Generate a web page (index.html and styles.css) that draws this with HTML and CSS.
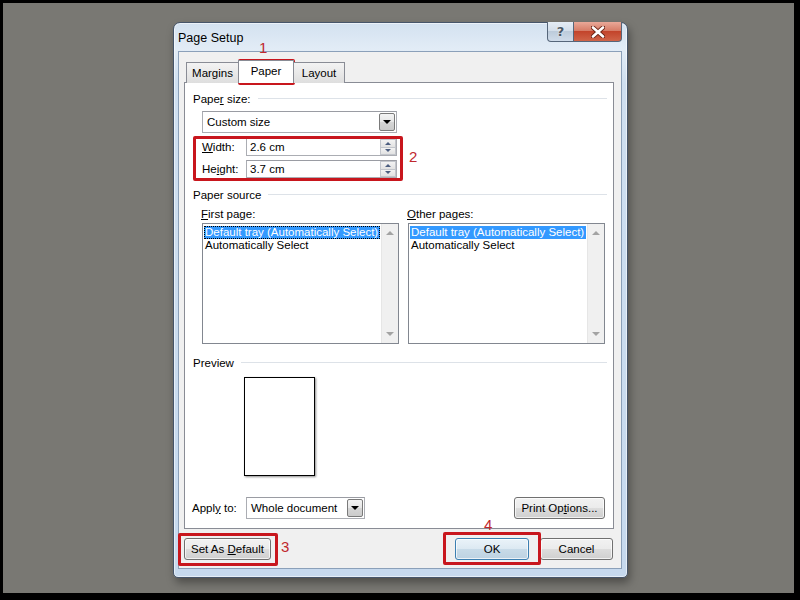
FILE: index.html
```html
<!DOCTYPE html>
<html lang="en">
<head>
  <meta charset="UTF-8" />
  <title>Page Setup</title>
  <link rel="stylesheet" href="styles.css">
</head>
<body>
  <div class="screen">
    <div class="dialog">
      <div class="titlebar">
        <span class="title">Page Setup</span>
        <div class="caption-btns">
          <div class="cap help">?</div>
          <div class="cap close">
            <svg width="14" height="12" viewBox="0 0 14 12">
              <path d="M2 1.5 L12 10.5 M12 1.5 L2 10.5" stroke="#6b2415" stroke-width="4.4" stroke-linecap="round"/>
              <path d="M2 1.5 L12 10.5 M12 1.5 L2 10.5" stroke="#fff" stroke-width="2.6" stroke-linecap="round"/>
            </svg>
          </div>
        </div>
      </div>

      <div class="client">
        <div class="tabs">
          <div class="tab tab-margins">Margins</div>
          <div class="tab tab-paper selected">Paper</div>
          <div class="tab tab-layout">Layout</div>
        </div>

        <div class="panel">
          <div class="group"><span>Pape<u>r</u> size:</span></div>
          <div class="indent">
            <div class="select select-size">
              <span>Custom size</span>
              <span class="drop"><i class="tri-down"></i></span>
            </div>
            <div class="field-row first">
              <label><u>W</u>idth:</label>
              <div class="spin-input">
                <span>2.6 cm</span>
                <span class="spin"><b><i class="tri-up"></i></b><b><i class="tri-down small"></i></b></span>
              </div>
            </div>
            <div class="field-row">
              <label>He<u>i</u>ght:</label>
              <div class="spin-input">
                <span>3.7 cm</span>
                <span class="spin"><b><i class="tri-up"></i></b><b><i class="tri-down small"></i></b></span>
              </div>
            </div>
          </div>

          <div class="group source"><span>Paper source</span></div>
          <div class="indent lists">
            <div class="list-col">
              <div class="list-label"><u>F</u>irst page:</div>
              <div class="listbox">
                <div class="items">
                  <div class="item active focus">Default tray (Automatically Select)</div>
                  <div class="item">Automatically Select</div>
                </div>
                <div class="scrollbar"><i class="sb-up"></i><i class="sb-down"></i></div>
              </div>
            </div>
            <div class="list-col">
              <div class="list-label"><u>O</u>ther pages:</div>
              <div class="listbox">
                <div class="items">
                  <div class="item active">Default tray (Automatically Select)</div>
                  <div class="item">Automatically Select</div>
                </div>
                <div class="scrollbar"><i class="sb-up"></i><i class="sb-down"></i></div>
              </div>
            </div>
          </div>

          <div class="group preview-label"><span>Preview</span></div>
          <div class="preview-page"></div>

          <div class="apply-row">
            <label>Appl<u>y</u> to:</label>
            <div class="select select-apply">
              <span>Whole document</span>
              <span class="drop"><i class="tri-down"></i></span>
            </div>
            <button class="btn btn-print">Print Op<u>t</u>ions...</button>
          </div>
        </div>

        <div class="footer">
          <button class="btn btn-default">Set As <u>D</u>efault</button>
          <div class="footer-right">
            <button class="btn btn-ok">OK</button>
            <button class="btn btn-cancel">Cancel</button>
          </div>
        </div>
      </div>
    </div>

    <!-- red annotation boxes and step numbers -->
    <div class="mark mark-1"></div>
    <div class="mark mark-2"></div>
    <div class="mark mark-3"></div>
    <div class="mark mark-4"></div>
    <span class="num num-1">1</span>
    <span class="num num-2">2</span>
    <span class="num num-3">3</span>
    <span class="num num-4">4</span>
  </div>
</body>
</html>
```

FILE: styles.css
```css
/* Base */
* {
  box-sizing: border-box;
}
body {
  margin: 0;
  background: #000;
  font-family: "Liberation Sans", Arial, sans-serif;
  font-size: 11.5px;
  color: #000;
}
u {
  text-decoration: underline;
  text-underline-offset: 1px;
}
.screen {
  position: relative;
  width: 800px;
  height: 600px;
  background: #797873;
  border-style: solid;
  border-color: #000;
  border-width: 3px 6px 7px 3px;
  padding: 19px 0 0 170px;
}

/* Dialog frame */
.dialog {
  width: 455px;
  height: 556px;
  display: flex;
  flex-direction: column;
  border: 1px solid #46556a;
  border-radius: 7px 7px 5px 5px;
  background: linear-gradient(#d3e1f0, #e2ecf6 26px, #cfdff0 60px, #c6d9ee);
  padding: 0 5px 8px 4px;
  box-shadow: 2px 5px 8px rgba(0, 0, 0, 0.35), inset 0 0 0 1px rgba(255, 255, 255, 0.55);
}
.titlebar {
  height: 28px;
  display: flex;
  justify-content: space-between;
  align-items: flex-start;
}
.title {
  margin-top: 8px;
  font-size: 12.5px;
  line-height: 14px;
}
.caption-btns {
  display: flex;
  margin-top: -1px;
}
.cap {
  height: 20px;
  border: 1px solid #56667a;
  border-top: none;
  display: flex;
  align-items: center;
  justify-content: center;
}
.help {
  width: 27px;
  border-radius: 0 0 0 4px;
  background: linear-gradient(#e4ecf5, #d2dde9 50%, #bccbdb 50%, #d0dcea);
  font-family: "DejaVu Sans", sans-serif;
  font-size: 13px;
  font-weight: bold;
  color: #4b5866;
  text-shadow: 0 0 2px #fff;
}
.close {
  width: 48px;
  border-left: none;
  border-radius: 0 0 4px 0;
  background: linear-gradient(#e9a898, #d67d68 45%, #c3442b 50%, #cf6448);
}

/* Client area */
.client {
  flex: 1;
  display: flex;
  flex-direction: column;
  background: #f0f0f0;
  border: 1px solid #8ba0b9;
  padding: 8px 7px 0 5px;
}
.tabs {
  display: flex;
  align-items: flex-end;
  height: 23px;
  margin-bottom: -1px;
  padding-left: 2px;
  position: relative;
  z-index: 1;
}
.tab {
  height: 21px;
  line-height: 20px;
  text-align: center;
  border: 1px solid #898c95;
  border-bottom: none;
  background: linear-gradient(#f3f3f3, #e9e9e9 50%, #dedede);
}
.tab + .tab {
  margin-left: -1px;
}
.tab-margins {
  width: 53px;
}
.tab-paper {
  width: 56px;
}
.tab-layout {
  width: 52px;
}
.tab.selected {
  height: 23px;
  line-height: 21px;
  background: #fff;
  position: relative;
  z-index: 2;
}

/* Tab page */
.panel {
  height: 447px;
  background: #fff;
  border: 1px solid #898c95;
  padding: 8px 6px 0 8px;
}
.group {
  display: flex;
  align-items: center;
  gap: 7px;
  height: 15px;
}
.group::after {
  content: "";
  flex: 1;
  border-top: 1px solid #dde2e8;
}
.indent {
  margin-left: 9px;
}

/* Combo boxes */
.select {
  display: flex;
  align-items: center;
  justify-content: space-between;
  height: 22px;
  background: #fff;
  border: 1px solid #abadb3;
  border-top-color: #9a9ca3;
  padding: 0 1px 0 4px;
}
.select-size {
  width: 195px;
  margin-top: 5px;
}
.drop {
  width: 16px;
  height: 18px;
  display: flex;
  align-items: center;
  justify-content: center;
  border: 1px solid #7a7a7a;
  border-radius: 2px;
  background: linear-gradient(#f4f4f4, #e6e6e6 50%, #d6d6d6 50%, #cbcbcb);
}
.tri-down {
  width: 0;
  height: 0;
  border-left: 4px solid transparent;
  border-right: 4px solid transparent;
  border-top: 4px solid #000;
}
.tri-down.small {
  border-left-width: 3px;
  border-right-width: 3px;
  border-top: 3px solid #4c5e80;
}
.tri-up {
  width: 0;
  height: 0;
  border-left: 3px solid transparent;
  border-right: 3px solid transparent;
  border-bottom: 3px solid #4c5e80;
}

/* Width / Height */
.field-row {
  display: flex;
  align-items: center;
  margin-top: 4px;
}
.field-row.first {
  margin-top: 5px;
}
.field-row label {
  width: 44px;
}
.spin-input {
  width: 151px;
  height: 18px;
  display: flex;
  align-items: center;
  justify-content: space-between;
  border: 1px solid #abadb3;
  border-top-color: #9a9ca3;
  padding: 0 0 0 3px;
}
.spin {
  width: 16px;
  height: 16px;
  display: flex;
  flex-direction: column;
}
.spin b {
  flex: 1;
  display: flex;
  align-items: center;
  justify-content: center;
  background: linear-gradient(#f3f3f3, #e2e2e2);
  border: 1px solid #c3c6cc;
}
.spin b + b {
  border-top: none;
}

/* Paper source lists */
.source {
  margin-top: 9px;
}
.lists {
  display: flex;
  gap: 9px;
  margin-top: 5px;
}
.list-label {
  height: 14px;
  line-height: 14px;
  margin-left: -1px;
}
.listbox {
  width: 197px;
  height: 121px;
  margin-top: 2px;
  display: flex;
  border: 1px solid #828790;
  background: #fff;
}
.items {
  flex: 1;
  min-width: 0;
  padding: 2px 0 0 1px;
}
.item {
  width: fit-content;
  height: 13px;
  line-height: 13px;
  padding: 0 2px 0 1px;
  white-space: nowrap;
}
.item.active {
  background: #3399ff;
  color: #fff;
}
.item.focus {
  outline: 1px dotted #000;
  outline-offset: -1px;
}
.scrollbar {
  width: 17px;
  flex-shrink: 0;
  display: flex;
  flex-direction: column;
  justify-content: space-between;
  align-items: center;
  padding: 7px 0 7px;
  background: #f0f0f0;
  border-left: 1px solid #e6e6e6;
}
.sb-up {
  border-left: 4px solid transparent;
  border-right: 4px solid transparent;
  border-bottom: 4px solid #a3a3a3;
}
.sb-down {
  border-left: 4px solid transparent;
  border-right: 4px solid transparent;
  border-top: 4px solid #a3a3a3;
}

/* Preview */
.preview-label {
  margin-top: 11px;
}
.preview-page {
  width: 71px;
  height: 99px;
  margin: 7px 0 0 51px;
  background: #fff;
  border: 1px solid #000;
  box-shadow: 1px 1px 2px rgba(0, 0, 0, 0.45);
}
.apply-row {
  display: flex;
  align-items: center;
  margin-top: 21px;
  margin-left: -1px;
}
.apply-row label {
  width: 54px;
}
.select-apply {
  width: 119px;
}

/* Buttons */
.btn {
  height: 22px;
  padding: 0;
  font-family: inherit;
  font-size: 11.5px;
  color: #000;
  border: 1px solid #707070;
  border-radius: 3px;
  background: linear-gradient(#f2f2f2, #ebebeb 50%, #dddddd 50%, #cfcfcf);
  box-shadow: inset 0 0 0 1px rgba(255, 255, 255, 0.7);
}
.btn-print {
  width: 91px;
  margin-left: auto;
  margin-right: 2px;
}
.footer {
  display: flex;
  justify-content: space-between;
  margin-top: 9px;
}
.btn-default {
  width: 87px;
}
.footer-right {
  display: flex;
  gap: 11px;
  margin-right: 1px;
}
.btn-ok {
  width: 74px;
  border-color: #3c7fb1;
  background: linear-gradient(#eaf3f9, #dce9f2 50%, #c8dbe8 50%, #bdd2e2);
}
.btn-cancel {
  width: 73px;
}

/* Annotations */
.mark {
  position: absolute;
  border: 3px solid #c8161d;
  border-radius: 2px;
}
.mark-1 {
  left: 235px;
  top: 56px;
  width: 57px;
  height: 26px;
}
.mark-2 {
  left: 190px;
  top: 133px;
  width: 210px;
  height: 45px;
}
.mark-3 {
  left: 175px;
  top: 530px;
  width: 100px;
  height: 33px;
}
.mark-4 {
  left: 440px;
  top: 529px;
  width: 98px;
  height: 33px;
}
.num {
  position: absolute;
  color: #c0282e;
  font-size: 15px;
  line-height: 15px;
}
.num-1 {
  left: 256px;
  top: 37px;
}
.num-2 {
  left: 406px;
  top: 146px;
}
.num-3 {
  left: 278px;
  top: 536px;
}
.num-4 {
  left: 481px;
  top: 514px;
}
```
